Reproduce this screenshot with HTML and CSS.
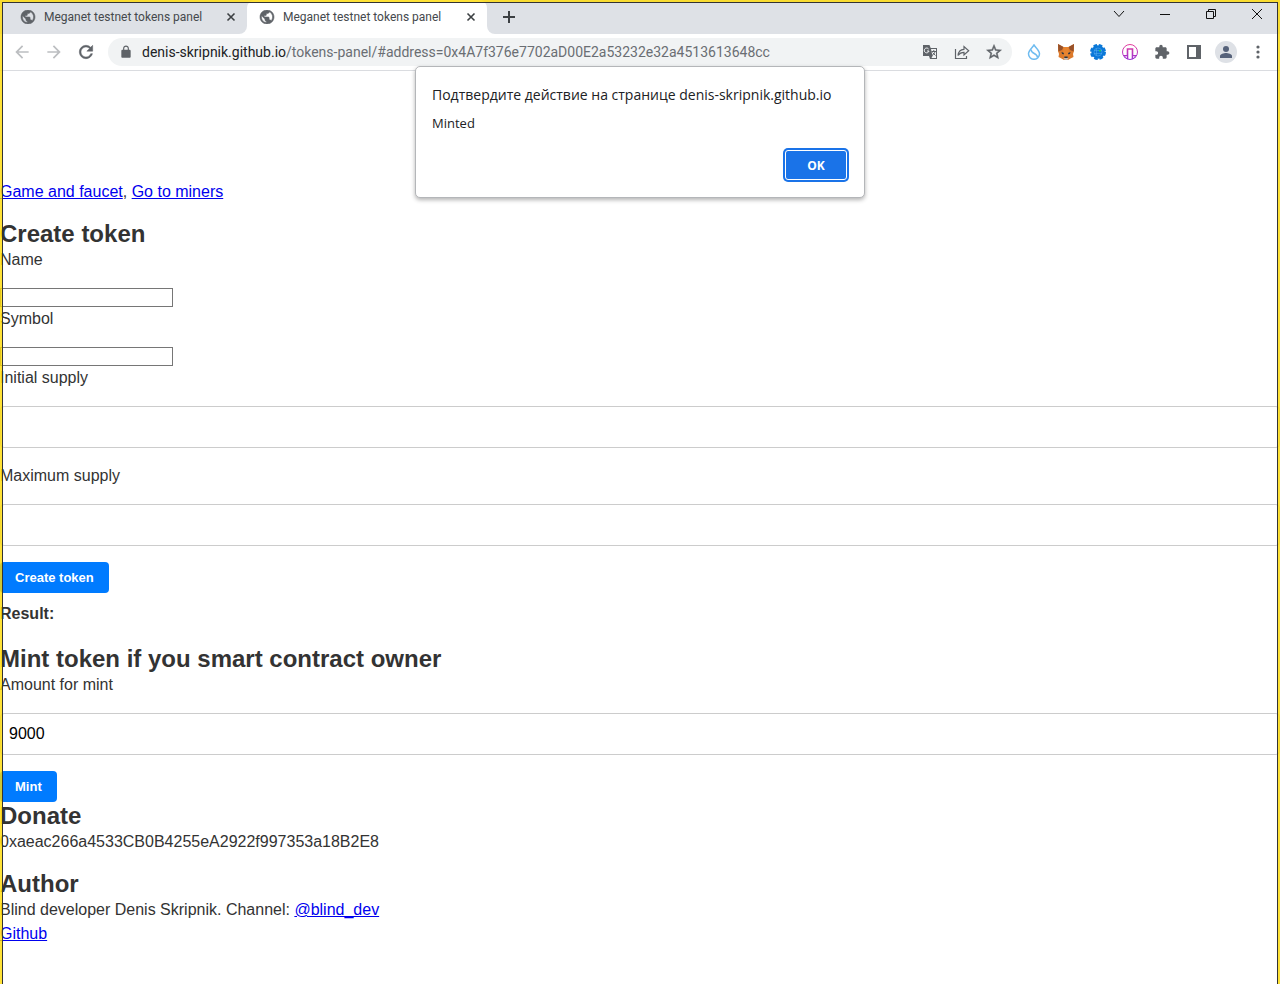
FILE: index.html
```html
<!DOCTYPE html>
<html lang="en">
<head>
    <meta charset="UTF-8">
    <meta name="viewport" content="width=device-width, initial-scale=1.0">
    <title>Meganet testnet tokens panel</title>
    <link rel="stylesheet" href="styles.css">
</head>
<body>
    <svg class="sprite" aria-hidden="true">
        <symbol id="globe" viewBox="2 2 20 20">
            <path d="M12 2C6.48 2 2 6.48 2 12s4.48 10 10 10 10-4.48 10-10S17.52 2 12 2zm-1 17.93c-3.95-.49-7-3.85-7-7.93 0-.62.08-1.21.21-1.79L9 15v1c0 1.1.9 2 2 2v1.93zm6.9-2.54c-.26-.81-1-1.39-1.9-1.39h-1v-3c0-.55-.45-1-1-1H8v-2h2c.55 0 1-.45 1-1V7h2c1.1 0 2-.9 2-2v-.41c2.93 1.19 5 4.06 5 7.41 0 2.08-.8 3.97-2.1 5.39z" stroke="#5f6368" stroke-width=".8"/>
        </symbol>
        <symbol id="cross" viewBox="0 0 16 16">
            <path d="M4.500 4.500l7 7M11.500 4.500l-7 7" fill="none" stroke="#3c4043" stroke-width="1.600"/>
        </symbol>
    </svg>

    <header class="browser">
        <div class="tab-strip">
            <div class="tab tab-first">
                <svg class="favicon"><use href="#globe"/></svg>
                <button class="tab-title">Meganet testnet tokens panel</button>
                <button class="tab-close" aria-label="Close tab"><svg width="16" height="16"><use href="#cross"/></svg></button>
            </div>
            <div class="tab tab-active">
                <svg class="favicon"><use href="#globe"/></svg>
                <button class="tab-title">Meganet testnet tokens panel</button>
                <button class="tab-close" aria-label="Close tab"><svg width="16" height="16"><use href="#cross"/></svg></button>
            </div>
            <div class="strip-rest">
                <button class="new-tab" aria-label="New tab">
                    <svg width="16" height="16" viewBox="0 0 16 16"><path d="M8 2v12M2 8h12" stroke="#3c4043" stroke-width="2"/></svg>
                </button>
                <div class="window-controls">
                    <button aria-label="Search tabs"><svg width="12" height="12" viewBox="0 0 12 12"><path d="M1 3l5 5.500l5-5.500"/></svg></button>
                    <button aria-label="Minimize"><svg width="12" height="12" viewBox="0 0 12 12"><path d="M1 6.500h10"/></svg></button>
                    <button aria-label="Restore"><svg width="12" height="12" viewBox="0 0 12 12"><path d="M1.500 3.500h7v7h-7zM3.500 3.500v-2h7v7h-2"/></svg></button>
                    <button aria-label="Close"><svg width="12" height="12" viewBox="0 0 12 12"><path d="M1 1l10 10M11 1L1 11"/></svg></button>
                </div>
            </div>
        </div>

        <div class="toolbar">
            <button class="tool disabled" aria-label="Back"><svg width="20" height="20" viewBox="0 0 24 24"><path d="M20 11H7.830l5.590-5.590L12 4l-8 8 8 8 1.410-1.410L7.830 13H20v-2z"/></svg></button>
            <button class="tool disabled" aria-label="Forward"><svg width="20" height="20" viewBox="0 0 24 24"><path d="M12 4l-1.410 1.410L16.170 11H4v2h12.170l-5.580 5.590L12 20l8-8z"/></svg></button>
            <button class="tool" aria-label="Reload"><svg width="20" height="20" viewBox="0 0 24 24"><path d="M17.650 6.350C16.200 4.900 14.210 4 12 4c-4.420 0-7.990 3.580-7.990 8s3.570 8 7.990 8c3.730 0 6.840-2.550 7.730-6h-2.080c-.82 2.330-3.040 4-5.650 4-3.310 0-6-2.690-6-6s2.690-6 6-6c1.660 0 3.140.69 4.220 1.780L13 11h7V4l-2.350 2.350z" stroke="#5f6368" stroke-width=".6"/></svg></button>

            <div class="address-bar">
                <button class="tool" aria-label="Site information"><svg width="14" height="14" viewBox="0 0 24 24"><path d="M18 8h-1V6c0-2.760-2.240-5-5-5S7 3.240 7 6v2H6c-1.100 0-2 .9-2 2v10c0 1.100.9 2 2 2h12c1.100 0 2-.9 2-2V10c0-1.100-.9-2-2-2zM9 8V6c0-1.660 1.340-3 3-3s3 1.340 3 3v2H9z"/></svg></button>
                <div class="url" role="textbox" aria-label="Address" contenteditable="true" spellcheck="false"><span class="host">denis-skripnik.github.io</span>/tokens-panel/#address=0x4A7f376e7702aD00E2a53232e32a4513613648cc</div>
                <button class="tool" aria-label="Translate">
                    <svg width="16" height="16" viewBox="0 0 16 16">
                        <path d="M1 1h6.500l1.200 3H15v11H8l-1-3H1z"/>
                        <path d="M9 5h5v9H9.500l1-2z" fill="#f1f3f4"/>
                        <path d="M6.600 5A2.400 2.400 0 1 0 7 7H5" fill="none" stroke="#f1f3f4"/>
                        <path d="M9.500 7.500H14M11.800 6v1.500M13 7.500c-.5 2-1.500 3-3 4M10.500 8.500l3 3" fill="none" stroke="#5f6368"/>
                    </svg>
                </button>
                <button class="tool" aria-label="Share">
                    <svg width="16" height="16" viewBox="0 0 16 16"><path d="M1.500 5v9.500h11V12M4 11.500c.4-4 2.500-6 6-6.200V2.500l4.700 4.300L10 11V8.300c-2.700 0-4.500 1-6 3.200z" fill="none" stroke="#5f6368" stroke-width="1.200"/></svg>
                </button>
                <button class="tool" aria-label="Bookmark this tab"><svg width="18" height="18" viewBox="0 0 24 24"><path d="M22 9.240l-7.190-.62L12 2 9.190 8.630 2 9.240l5.460 4.730L5.820 21 12 17.270 18.180 21l-1.630-7.030L22 9.240zM12 15.400l-3.760 2.270 1-4.280-3.320-2.880 4.380-.38L12 6.100l1.710 4.040 4.380.38-3.320 2.880 1 4.280L12 15.400z" stroke="#5f6368" stroke-width=".6"/></svg></button>
            </div>

            <button class="tool" aria-label="Sui wallet">
                <svg width="16" height="16" viewBox="0 0 16 16" fill="none" stroke="#6fbcf0" stroke-width="1.500"><path d="M8 1C6.500 3.400 2.500 6.500 2.500 9.800a5.500 5.500 0 0 0 11 0C13.500 6.500 9.500 3.400 8 1z"/><path d="M5 5.500c0 4.500 6.500 3.500 6.500 8"/></svg>
            </button>
            <button class="tool" aria-label="MetaMask">
                <svg width="16" height="16" viewBox="0 0 16 16">
                    <path d="M0 0l5.500 3h5L16 0v7l-1 3 .5 3-3 1.500-2.500 1.500H6l-2.500-1.500-3-1.500.5-3-1-3z" fill="#dd7a2b"/>
                    <path d="M0 0l5.500 3L4 6 .5 7.500zM16 0l-5.500 3L12 6l3.500 1.500z" fill="#96512a"/>
                    <path d="M5.500 3h5l.5 6-1 4H6L5 9z" fill="#e8842f"/>
                    <path d="M3.500 8l2.500 1-.5 1.500-1.500-.8zM12.500 8L10 9l.5 1.500 1.500-.8zM6.300 12.500h3.400L9.500 14h-3z" fill="#233447"/>
                    <path d="M5.500 14h5L9.500 16h-3z" fill="#c9b9ac"/>
                </svg>
            </button>
            <button class="tool" aria-label="Network extension">
                <svg width="16" height="16" viewBox="0 0 16 16">
                    <circle cx="8" cy="8" r="6.700" fill="#0b78d8"/>
                    <circle cx="8" cy="8" r="6" fill="none" stroke="#0b78d8" stroke-width="4" stroke-dasharray="3.140 1.570"/>
                    <circle cx="8" cy="8" r="4" fill="none" stroke="#5aaef0" stroke-width=".5"/>
                    <path d="M4 6.500h8M4 9.500h8M6.500 4.500v7" stroke="#5aaef0" stroke-width=".5"/>
                    <path d="M9 6h2v1.500H9z" fill="#1dc66b"/>
                </svg>
            </button>
            <button class="tool" aria-label="Bridge wallet">
                <svg width="16" height="16" viewBox="0 0 16 16" fill="none">
                    <defs><linearGradient id="pink" gradientUnits="userSpaceOnUse" x1="0" y1="0" x2="0" y2="16"><stop offset="0" stop-color="#e63e9b"/><stop offset="1" stop-color="#9a32d6"/></linearGradient></defs>
                    <circle cx="8" cy="8" r="7.500" stroke="url(#pink)"/>
                    <path d="M5.500 15V5h5v10" stroke="url(#pink)" stroke-width="1.600"/>
                    <path d="M1 11.500h4M11 11.500h4M3 12v2M13 12v2" stroke="url(#pink)"/>
                </svg>
            </button>
            <button class="tool" aria-label="Extensions"><svg width="16" height="16" viewBox="0 0 24 24"><path d="M20.500 11H19V7c0-1.100-.9-2-2-2h-4V3.500C13 2.120 11.880 1 10.500 1S8 2.120 8 3.500V5H4c-1.100 0-1.990.9-1.990 2v3.800H3.500c1.490 0 2.700 1.210 2.700 2.700s-1.210 2.700-2.700 2.700H2V20c0 1.100.9 2 2 2h3.800v-1.500c0-1.490 1.210-2.700 2.700-2.700 1.490 0 2.700 1.210 2.700 2.700V22H17c1.100 0 2-.9 2-2v-4h1.500c1.380 0 2.500-1.120 2.500-2.500S21.880 11 20.500 11z"/></svg></button>
            <button class="tool" aria-label="Side panel"><svg width="14" height="14" viewBox="0 0 14 14"><path d="M0 0h14v14H0zM2 2v10h7V2z" fill-rule="evenodd"/></svg></button>
            <button class="tool" aria-label="Profile">
                <svg width="22" height="22" viewBox="0 0 22 22"><circle cx="11" cy="11" r="11" fill="#dee1e6"/><circle cx="11" cy="8" r="3" fill="#56627a"/><path d="M5 17v-2c0-2 4-3 6-3s6 1 6 3v2z" fill="#56627a"/></svg>
            </button>
            <button class="tool" aria-label="Menu"><svg width="16" height="16" viewBox="0 0 16 16"><circle cx="8" cy="3" r="1.600"/><circle cx="8" cy="8" r="1.600"/><circle cx="8" cy="13" r="1.600"/></svg></button>
        </div>
    </header>

    <main class="page">
        <p><a href="#game">Game and faucet</a>, <a href="#miners">Go to miners</a></p>

        <h2>Create token</h2>
        <label for="name">Name</label>
        <input type="text" id="name" class="small-input">
        <label for="symbol">Symbol</label>
        <input type="text" id="symbol" class="small-input">
        <label for="initial">Initial supply</label>
        <input type="text" id="initial" class="wide-input">
        <label for="maximum">Maximum supply</label>
        <input type="text" id="maximum" class="wide-input">
        <button class="btn">Create token</button>
        <div class="result"><strong>Result:</strong></div>

        <h2>Mint token if you smart contract owner</h2>
        <label for="amount">Amount for mint</label>
        <input type="text" id="amount" class="wide-input" value="9000">
        <button class="btn">Mint</button>

        <h2>Donate</h2>
        <p>0xaeac266a4533CB0B4255eA2922f997353a18B2E8</p>

        <h2>Author</h2>
        <p>Blind developer Denis Skripnik. Channel: <a href="#blind_dev">@blind_dev</a><br>
        <a href="#github">Github</a></p>
    </main>

    <dialog class="alert" open aria-labelledby="alert-title">
        <div class="alert-title" id="alert-title">Подтвердите действие на странице denis-skripnik.github.io</div>
        <div class="alert-text">Minted</div>
        <button class="alert-ok">OK</button>
    </dialog>

    <div class="frame"></div>
</body>
</html>
```
FILE: styles.css
```css
* {
    box-sizing: border-box;
}

body {
    font-family: "Liberation Sans", Arial, sans-serif;
    font-size: 16px;
    line-height: 24px;
    margin: 0;
    min-height: 100vh;
    position: relative;
    background-color: #fff;
    color: #333;
}

button {
    font-family: inherit;
    border: none;
    padding: 0;
    background: none;
    cursor: pointer;
}

.sprite {
    display: none;
}

/* Browser window */
.browser {
    font-family: Roboto, "Noto Sans", sans-serif;
    border-bottom: 1px solid #dadce0;
}

.tab-strip {
    display: flex;
    height: 34px;
    background: linear-gradient(#dee1e6 50%, #fff 50%);
}

.tab {
    display: flex;
    align-items: center;
    gap: 8px;
    width: 240px;
    padding: 0 8px 0 12px;
}

.tab-first {
    width: 247px;
    padding-left: 20px;
    background-color: #dee1e6;
    border-radius: 0 0 8px 0;
}

.tab-active {
    background-color: #fff;
    border-radius: 8px 8px 0 0;
}

.favicon {
    flex: none;
    width: 16px;
    height: 14px;
    fill: #5f6368;
}

.tab-title {
    flex: 1;
    font-size: 12px;
    text-align: left;
    white-space: nowrap;
    color: #45494d;
}

.tab-close,
.new-tab {
    display: flex;
}

.strip-rest {
    flex: 1;
    display: flex;
    align-items: center;
    justify-content: space-between;
    padding-left: 14px;
    background-color: #dee1e6;
    border-radius: 0 0 0 8px;
}

.window-controls {
    display: flex;
    align-self: flex-start;
}

.window-controls button {
    display: flex;
    align-items: center;
    justify-content: center;
    width: 46px;
    height: 28px;
}

.window-controls svg {
    fill: none;
    stroke: #111;
}

.toolbar {
    display: flex;
    align-items: center;
    height: 36px;
    padding: 0 6px;
}

.tool {
    display: flex;
    align-items: center;
    justify-content: center;
    flex: none;
    width: 32px;
    height: 28px;
    fill: #5f6368;
}

.disabled {
    fill: #bcbec1;
}

.address-bar {
    flex: 1;
    display: flex;
    align-items: center;
    height: 28px;
    margin: 0 6px;
    padding: 0 2px;
    border-radius: 14px;
    background-color: #f1f3f4;
}

.url {
    flex: 1;
    font-size: 14px;
    white-space: nowrap;
    overflow: hidden;
    color: #6a6e73;
}

.host {
    color: #202124;
}

/* Tokens page */
.page {
    padding-top: 109px;
}

.page p {
    margin: 0 0 16px;
}

.page a {
    color: #0000ee;
}

h2 {
    font-size: 24px;
    line-height: 28px;
    margin: 0;
}

label {
    display: block;
    margin-bottom: 16px;
}

.small-input {
    display: block;
    width: 173px;
    height: 19px;
    border: 1px solid #767676;
}

.wide-input {
    display: block;
    width: 100%;
    height: 42px;
    margin-bottom: 16px;
    padding: 8px;
    border: 1px solid #ccc;
    border-radius: 4px;
    font-family: inherit;
    font-size: 16px;
    color: #000;
}

.btn {
    display: block;
    height: 31px;
    padding: 0 15px;
    border-radius: 4px;
    background-color: #007bff;
    color: #fff;
    font-size: 13px;
    font-weight: bold;
}

.result {
    margin: 9px 0 19px;
}

/* Alert window over the page */
.alert {
    position: absolute;
    top: 66px;
    left: 0;
    right: 0;
    width: 450px;
    margin: 0 auto;
    padding: 16px 17px 17px 16px;
    display: flex;
    flex-direction: column;
    border: 1px solid #b4b6b9;
    border-radius: 5px;
    background-color: #fff;
    color: #202124;
    box-shadow: 0 2px 4px rgba(0, 0, 0, 0.3);
    font-family: "Open Sans", "Noto Sans", sans-serif;
}

.alert-title {
    font-size: 14px;
    white-space: nowrap;
}

.alert-text {
    margin: 4px 0 15px;
    font-size: 13px;
}

.alert-ok {
    align-self: flex-end;
    width: 62px;
    height: 30px;
    border: 1px solid #fff;
    border-radius: 3px;
    background-color: #1a73e8;
    box-shadow: 0 0 0 2px #1a73e8;
    color: #fff;
    font-size: 12px;
    font-weight: bold;
}

/* Yellow highlight around the whole window */
.frame {
    position: absolute;
    inset: 0;
    border: 2px solid rgba(255, 219, 4, 0.8);
    border-bottom: none;
    pointer-events: none;
    box-shadow: inset 1px 1px #333, inset -1px 0 #333;
}
```
